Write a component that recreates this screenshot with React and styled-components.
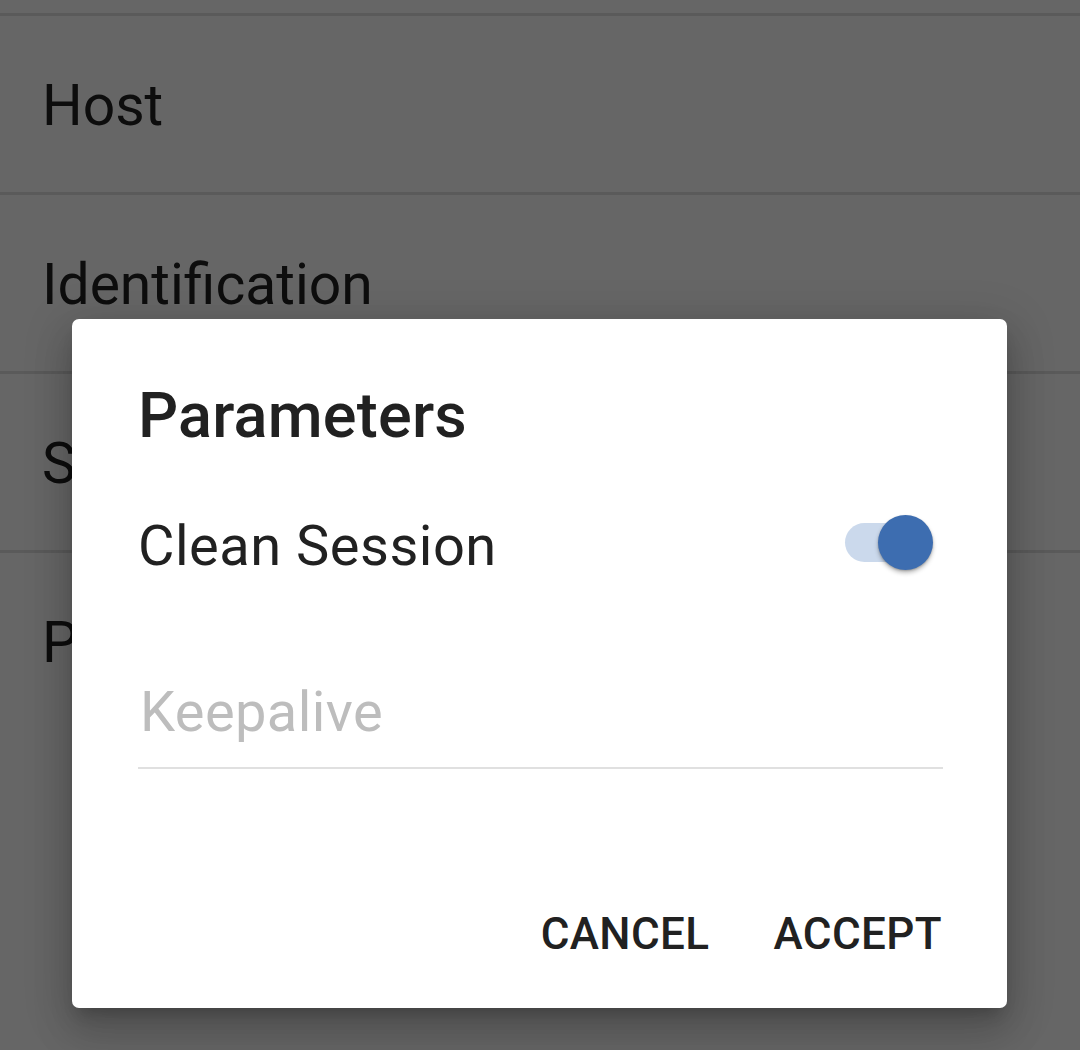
import React from "react";
import styled, { createGlobalStyle } from "styled-components";

const Global = createGlobalStyle`
  html, body { margin: 0; padding: 0; background: #ffffff; }
  body { font-family: Roboto, "Noto Sans", "Liberation Sans", sans-serif; }
  #root { min-height: 1050px; }
`;

const Page = styled.div`
  position: relative;
  width: 1080px;
  height: 1050px;
  overflow: hidden;
  background: #ffffff;
`;

const List = styled.div`
  display: flex;
  flex-direction: column;
  padding-top: 13px;
`;

const ListRow = styled.div`
  box-sizing: border-box;
  height: 179px;
  border-top: ${(p) => (p.$divider ? "3px solid #e2e2e2" : "none")};
  padding: 61px 0 0 42px;
  font-size: 57px;
  line-height: 1;
  color: #212121;
`;

const Scrim = styled.div`
  position: absolute;
  inset: 0;
  background: rgba(0, 0, 0, 0.6);
  display: flex;
  justify-content: center;
  align-items: flex-start;
  padding-top: 319px;
`;

const Dialog = styled.div`
  box-sizing: border-box;
  width: 935px;
  height: 689px;
  margin-left: -1px;
  background: #ffffff;
  border-radius: 7px;
  box-shadow: 0 24px 38px 3px rgba(0, 0, 0, 0.14), 0 9px 46px 8px rgba(0, 0, 0, 0.12),
    0 11px 15px -7px rgba(0, 0, 0, 0.2);
  padding: 65px 65px 0 66px;
  display: flex;
  flex-direction: column;
`;

const Title = styled.h2`
  margin: 0;
  font-size: 63px;
  line-height: 1;
  font-weight: 500;
  color: #212121;
  letter-spacing: 0.2px;
`;

const SwitchRow = styled.div`
  margin-top: 71px;
  display: flex;
  align-items: center;
  justify-content: space-between;
`;

const Label = styled.span`
  font-size: 56px;
  line-height: 1;
  color: #212121;
  letter-spacing: 0.5px;
`;

const Switch = styled.div`
  position: relative;
  width: 88px;
  height: 55px;
  margin-right: 9px;
  margin-top: -7px;
`;

const Track = styled.div`
  position: absolute;
  left: 0;
  right: 2px;
  top: 8px;
  height: 39px;
  border-radius: 20px;
  background: #cbd9ec;
`;

const Thumb = styled.div`
  position: absolute;
  right: 0;
  top: 0;
  width: 55px;
  height: 55px;
  border-radius: 50%;
  background: #3d6db0;
  box-shadow: 0 3px 4px rgba(0, 0, 0, 0.25), 0 1px 2px rgba(0, 0, 0, 0.2);
`;

const Field = styled.div`
  margin-top: 110px;
  padding: 0 0 27px 0;
  border-bottom: 2px solid #e0e0e0;
  margin-right: -1px;
`;

const Hint = styled.span`
  display: block;
  font-size: 56px;
  line-height: 1;
  color: #bdbdbd;
  padding-left: 2px;
  letter-spacing: 0.4px;
`;

const Actions = styled.div`
  margin-top: 143px;
  display: flex;
  justify-content: flex-end;
  gap: 64px;
`;

const Button = styled.span`
  font-size: 44px;
  line-height: 1;
  font-weight: 500;
  color: #212121;
  letter-spacing: 0.4px;
`;

export default function App() {
  return (
    <Page>
      <Global />
      <List>
        <ListRow $divider>Host</ListRow>
        <ListRow $divider>Identification</ListRow>
        <ListRow $divider>Security</ListRow>
        <ListRow $divider>Parameters</ListRow>
      </List>
      <Scrim>
        <Dialog>
          <Title>Parameters</Title>
          <SwitchRow>
            <Label>Clean Session</Label>
            <Switch>
              <Track />
              <Thumb />
            </Switch>
          </SwitchRow>
          <Field>
            <Hint>Keepalive</Hint>
          </Field>
          <Actions>
            <Button>CANCEL</Button>
            <Button>ACCEPT</Button>
          </Actions>
        </Dialog>
      </Scrim>
    </Page>
  );
}
